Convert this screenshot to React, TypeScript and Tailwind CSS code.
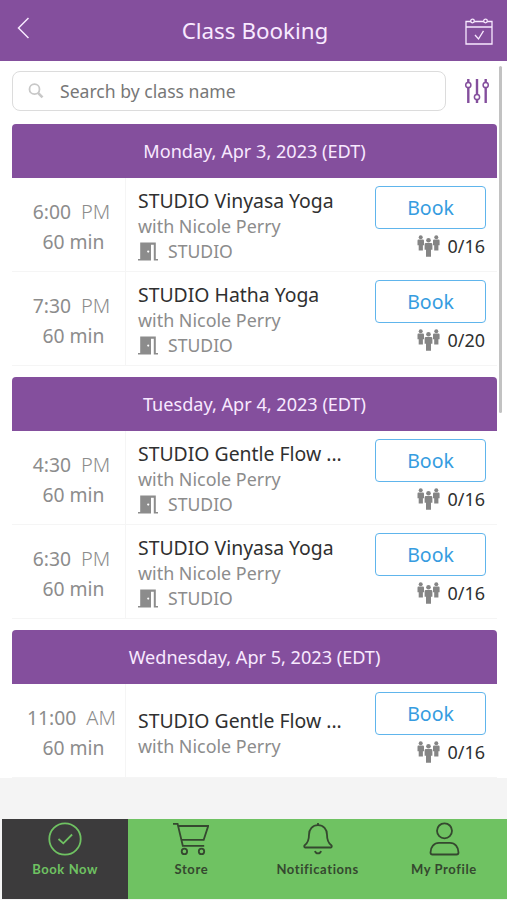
import { ReactNode, useState } from "react";

interface StudioClass {
  time: string;
  period: string;
  title: string;
  room?: string;
  booked: string;
}

interface Day {
  date: string;
  classes: StudioClass[];
}

const days: Day[] = [
  {
    date: "Monday, Apr 3, 2023 (EDT)",
    classes: [
      {
        time: "6:00",
        period: "PM",
        title: "STUDIO Vinyasa Yoga",
        room: "STUDIO",
        booked: "0/16"
      },
      {
        time: "7:30",
        period: "PM",
        title: "STUDIO Hatha Yoga",
        room: "STUDIO",
        booked: "0/20"
      }
    ]
  },
  {
    date: "Tuesday, Apr 4, 2023 (EDT)",
    classes: [
      {
        time: "4:30",
        period: "PM",
        title: "STUDIO Gentle Flow ...",
        room: "STUDIO",
        booked: "0/16"
      },
      {
        time: "6:30",
        period: "PM",
        title: "STUDIO Vinyasa Yoga",
        room: "STUDIO",
        booked: "0/16"
      }
    ]
  },
  {
    date: "Wednesday, Apr 5, 2023 (EDT)",
    classes: [
      {
        time: "11:00",
        period: "AM",
        title: "STUDIO Gentle Flow ...",
        booked: "0/16"
      }
    ]
  }
];

const BackIcon = () => (
  <svg className="w-3 h-[22px]" viewBox="0 0 12 22" fill="none" stroke="currentColor" strokeWidth="1.5">
    <path d="M11.500 1 1.500 11l10 10" />
  </svg>
);

const CalendarIcon = () => (
  <svg className="w-7 h-7" viewBox="0 0 28 28" fill="none" stroke="currentColor" strokeWidth="1.3">
    <path d="M5.800 3.500H1v22.500h26v-22.500h-4.800M9.200 3.500h9.600M1 9h26" />
    <circle cx="7.500" cy="3" r="1.800" />
    <circle cx="20.500" cy="3" r="1.800" />
    <path d="m10 17 3.500 4 5-8.200" />
  </svg>
);

const SearchIcon = () => (
  <svg className="w-4 h-4" viewBox="0 0 16 16" fill="none" stroke="currentColor" strokeWidth="1.800">
    <circle cx="6.500" cy="6.200" r="5" />
    <path d="m10 9.800 4.500 4.500" strokeWidth="2.600" />
  </svg>
);

const FilterIcon = () => (
  <svg className="w-[26px] h-[26px]" viewBox="0 0 26 26" fill="none" stroke="currentColor">
    <g strokeWidth="2.400">
      <path d="M4.300 1v3.200M4.300 9.800V25M13 1v15.200M13 21.800V25M21.700 1v3.200M21.700 9.800V25" />
    </g>
    <g strokeWidth="1.500">
      <circle cx="4.300" cy="7" r="2.600" />
      <circle cx="13" cy="19" r="2.600" />
      <circle cx="21.700" cy="7" r="2.600" />
    </g>
  </svg>
);

const DoorIcon = () => (
  <svg className="w-5 h-[19px]" viewBox="0 0 20 19" fill="currentColor">
    <path
      fillRule="evenodd"
      d="M2.200.5H13V18.500H0V17h2.200ZM10.200 8.500a1 1 0 1 0 .010 0Z"
    />
    <path d="M13 .5h4.800V17H20v1.500h-4.200V2.800H13Z" />
  </svg>
);

const PeopleIcon = () => (
  <svg className="w-[23px] h-[22px]" viewBox="0 0 23 22" fill="currentColor">
    <circle cx="3.700" cy="2.300" r="2" />
    <path d="M1.500 4.600h4.400q1.100 0 1.100 1.100v4.600H5.900V15.500H1.700v-5.200H.5V5.700q0-1.100 1-1.100Z" />
    <circle cx="19.300" cy="2.300" r="2" />
    <path d="M17.100 4.600h4.400q1.100 0 1.100 1.100v4.600h-1.200V15.500h-4.200v-5.200H16V5.700q0-1.100 1.100-1.100Z" />
    <circle cx="11.500" cy="5.200" r="2.300" />
    <path d="M9 8h5q1.400 0 1.400 1.400v5.300H14v7.100H9v-7.100H7.600V9.400Q7.600 8 9 8Z" />
  </svg>
);

const CheckCircleIcon = () => (
  <svg className="w-9 h-9" viewBox="0 0 36 36" fill="none" stroke="currentColor" strokeWidth="1.800">
    <circle cx="18" cy="18" r="15.700" />
    <path d="m11.500 18 4.800 4.300 8.800-8.800" />
  </svg>
);

const CartIcon = () => (
  <svg className="w-9 h-9" viewBox="0 0 36 36" fill="none" stroke="currentColor" strokeWidth="1.800">
    <path d="M0 2.800h4.600l5.200 22h21.400" />
    <path d="M5.200 5h30l-4.500 13.800H8.500" />
    <circle cx="11.400" cy="30.400" r="2.700" />
    <circle cx="28.500" cy="30.400" r="2.700" />
  </svg>
);

const BellIcon = () => (
  <svg className="w-9 h-9" viewBox="0 0 36 36" fill="none" stroke="currentColor" strokeWidth="1.800">
    <path d="M18 4.200c-5.500 0-9 4.200-9 9.500 0 5.800-1.300 8.300-4.300 10.500-.8.700-.6 2.300.5 2.300h25.600c1.100 0 1.300-1.600.5-2.300-3-2.200-4.300-4.700-4.300-10.500 0-5.300-3.500-9.500-9-9.500Z" />
    <path d="M18 2v2M15 30c.7 3.200 5.300 3.200 6 0" />
  </svg>
);

const ProfileIcon = () => (
  <svg className="w-9 h-9" viewBox="0 0 36 36" fill="none" stroke="currentColor" strokeWidth="1.800">
    <circle cx="18.500" cy="9.800" r="7.500" />
    <path d="M6.500 33.500q-2 0-2-2c0-5.500 3.500-9.700 8.500-9.700h11c5 0 8.500 4.200 8.500 9.700q0 2-2 2Z" />
  </svg>
);

const ClassRow = ({ item }: { item: StudioClass }) => (
  <div className="flex h-[94px] border-b border-[#f5f5f5]">
    <div className="flex w-[114px] shrink-0 flex-col items-center pt-[19px] pl-2.5 border-r border-[#f5f5f5] text-[19.300px] leading-[30px] text-[#8c8c8c]">
      <div className="flex gap-2.5 pr-1">
        <span>{item.time}</span>
        <span className="font-light text-[20px]">{item.period}</span>
      </div>
      <span>60 min</span>
    </div>
    <div
      className={`flex-1 min-w-0 pl-3 whitespace-nowrap ${
        item.room ? "pt-[9px]" : "pt-[22.500px]"
      }`}
    >
      <h3 className="text-[19.400px] leading-7 text-[#303030]">{item.title}</h3>
      <p className="text-[17.900px] leading-[23px] text-[#8c8c8c]">with Nicole Perry</p>
      {item.room && (
        <div className="flex items-center gap-2.5 text-[17.600px] leading-[27px] text-[#8c8c8c]">
          <DoorIcon />
          <span>{item.room}</span>
        </div>
      )}
    </div>
    <div className="flex w-[122px] shrink-0 flex-col items-end pt-[8px] pr-[11px]">
      <button className="w-[111px] h-[43px] rounded border-[1.500px] border-[#60b5ec] text-[19.500px] leading-[41px] text-[#369ce0]">
        Book
      </button>
      <div className="flex items-center gap-[7px] pt-[3px] pr-px text-[18px] leading-[28px] text-[#303030]">
        <span className="text-[#858585]">
          <PeopleIcon />
        </span>
        <span>{item.booked}</span>
      </div>
    </div>
  </div>
);

interface TabProps {
  label: string;
  icon: ReactNode;
  active: boolean;
  onClick: () => void;
}

const Tab = ({ label, icon, active, onClick }: TabProps) => (
  <button
    className={`flex flex-1 flex-col items-center pt-0.5 ${
      active ? "bg-[#3c3b3c] text-[#6fc262]" : "bg-[#6fc262] text-[#35482f]"
    }`}
    onClick={onClick}
  >
    {icon}
    <span className="pt-0.5 font-['Lato',sans-serif] text-[13px] leading-5 font-bold tracking-[0.6px]">
      {label}
    </span>
  </button>
);

export default function App() {
  const [activeTab, setActiveTab] = useState("Book Now");
  const [search, setSearch] = useState("");

  const tabs = [
    { label: "Book Now", icon: <CheckCircleIcon /> },
    { label: "Store", icon: <CartIcon /> },
    { label: "Notifications", icon: <BellIcon /> },
    { label: "My Profile", icon: <ProfileIcon /> }
  ];

  return (
    <div className="flex h-[900px] w-[507px] flex-col overflow-hidden bg-[#f4f4f4] font-['Noto_Sans',sans-serif]">
      <header className="flex h-[61px] shrink-0 items-center justify-between bg-[#844f9d] pl-[17px] pr-3.5 text-[#f8e9ff]">
        <button className="w-7 pb-1.5">
          <BackIcon />
        </button>
        <h1 className="text-[22.400px] pt-px">Class Booking</h1>
        <button className="pt-0.5">
          <CalendarIcon />
        </button>
      </header>

      <main className="relative h-[717px] shrink-0 overflow-hidden bg-white pl-3 pr-2.5">
        <div className="flex items-center pt-2.5">
          <label className="flex h-10 w-[434px] items-center gap-4 rounded-lg border-[1.500px] border-[#dcdcdc] pl-[15px] text-[#c8c8c8]">
            <SearchIcon />
            <input
              className="flex-1 min-w-0 text-[17.600px] text-[#777] placeholder:text-[#777] focus:outline-none"
              placeholder="Search by class name"
              value={search}
              onChange={(event) => setSearch(event.target.value)}
            />
          </label>
          <button className="ml-[18px] text-[#844f9d]">
            <FilterIcon />
          </button>
        </div>

        <div className="flex flex-col gap-[11px] pt-[13px]">
          {days.map((day) => (
            <section key={day.date}>
              <h2 className="h-[54px] rounded-t bg-[#844f9d] text-center text-[18.100px] leading-[54px] text-[#f8e9ff]">
                {day.date}
              </h2>
              {day.classes.map((item) => (
                <ClassRow key={item.time} item={item} />
              ))}
            </section>
          ))}
        </div>
        <div className="absolute right-[5px] top-[5px] h-[347px] w-[3px] rounded-full bg-[#c2c2c2]" />
      </main>

      <nav className="mt-[41px] mb-px ml-0.5 flex h-20 shrink-0">
        {tabs.map((tab) => (
          <Tab
            key={tab.label}
            label={tab.label}
            icon={tab.icon}
            active={activeTab === tab.label}
            onClick={() => setActiveTab(tab.label)}
          />
        ))}
      </nav>
    </div>
  );
}
